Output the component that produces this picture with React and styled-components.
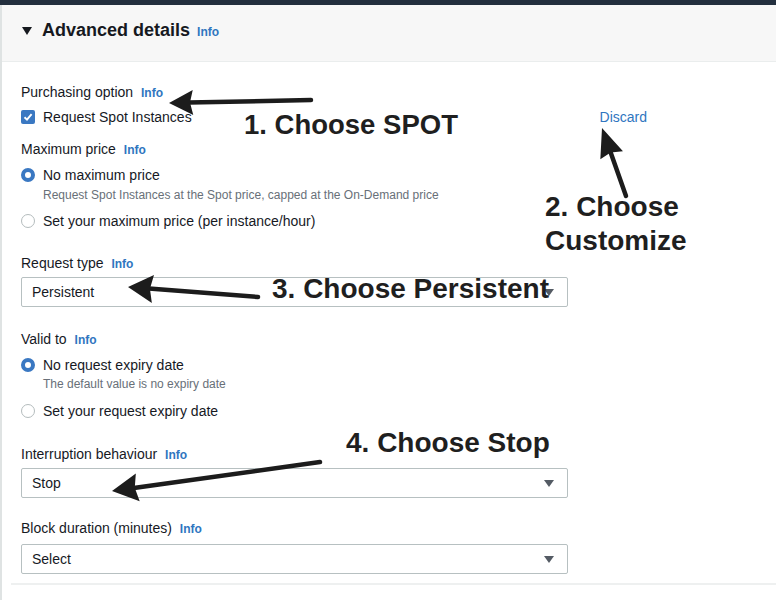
import React from 'react';
import styled, { createGlobalStyle } from 'styled-components';

const GlobalStyle = createGlobalStyle`
  body {
    margin: 0;
    background: #fff;
    font-family: "Liberation Sans", Arial, sans-serif;
    color: #16191f;
  }
`;

const BLUE = '#2f76bf';

const Arrow = ({ from, to, head = 25, spread = 13, width = 4.5 }) => {
  const [x1, y1] = from;
  const [x2, y2] = to;
  const len = Math.hypot(x2 - x1, y2 - y1);
  const ux = (x2 - x1) / len;
  const uy = (y2 - y1) / len;
  const bx = x2 - ux * head;
  const by = y2 - uy * head;
  const px = -uy * spread;
  const py = ux * spread;
  return (
    <g>
      <line x1={x1} y1={y1} x2={bx + ux * 4} y2={by + uy * 4} stroke="#1c1c1c" strokeWidth={width} strokeLinecap="round" />
      <polygon
        points={`${x2},${y2} ${bx + px},${by + py} ${bx + ux * 3},${by + uy * 3} ${bx - px},${by - py}`}
        fill="#1c1c1c"
      />
    </g>
  );
};

const App = () => {
  return (
    <Page>
      <GlobalStyle />
      <TopBar />
      <Panel>
        <Header>
          <Caret width="10" height="8" viewBox="0 0 10 8">
            <polygon points="0,0 10,0 5,8" fill="#16191f" />
          </Caret>
          <Title>Advanced details</Title>
          <Info>Info</Info>
        </Header>

        <Body>
          <FieldLabel $mt={0}>Purchasing option <Info>Info</Info></FieldLabel>
          <CheckRow>
            <OptionRow $mt={4}>
              <Checkbox>
                <svg width="10" height="10" viewBox="0 0 10 10">
                  <polyline points="1.5,5.2 4,7.6 8.6,2.2" fill="none" stroke="#fff" strokeWidth="1.9" />
                </svg>
              </Checkbox>
              Request Spot Instances
            </OptionRow>
            <Link>Discard</Link>
          </CheckRow>

          <FieldLabel $mt={12}>Maximum price <Info>Info</Info></FieldLabel>
          <OptionRow $mt={5}><Radio $on />No maximum price</OptionRow>
          <Hint $mt={2}>Request Spot Instances at the Spot price, capped at the On-Demand price</Hint>
          <OptionRow $mt={8}><Radio />Set your maximum price (per instance/hour)</OptionRow>

          <FieldLabel $mt={22}>Request type <Info>Info</Info></FieldLabel>
          <Select $mt={3}>Persistent<SelectCaret /></Select>

          <FieldLabel $mt={22}>Valid to <Info>Info</Info></FieldLabel>
          <OptionRow $mt={5}><Radio $on />No request expiry date</OptionRow>
          <Hint $mt={1}>The default value is no expiry date</Hint>
          <OptionRow $mt={9}><Radio />Set your request expiry date</OptionRow>

          <FieldLabel $mt={23}>Interruption behaviour <Info>Info</Info></FieldLabel>
          <Select $mt={3}>Stop<SelectCaret /></Select>

          <FieldLabel $mt={20}>Block duration (minutes) <Info>Info</Info></FieldLabel>
          <Select $mt={5}>Select<SelectCaret /></Select>
        </Body>
        <Divider />
      </Panel>

      <Overlay width="776" height="600" viewBox="0 0 776 600">
        <Arrow from={[311, 100]} to={[169, 103]} head={24} spread={12.5} />
        <Arrow from={[626, 196]} to={[602, 128]} head={29} spread={12} />
        <Arrow from={[258, 297]} to={[128, 287]} head={25} spread={14} />
        <Arrow from={[320, 462]} to={[112, 491]} head={26} spread={14} />
      </Overlay>

      <Note $x={244} $y={108} $size={27.5}>1. Choose SPOT</Note>
      <Note $x={545} $y={190}>2. Choose<br />Customize</Note>
      <Note $x={272} $y={272}>3. Choose Persistent</Note>
      <Note $x={346} $y={426}>4. Choose Stop</Note>
    </Page>
  );
};

export default App;

// Styled Components:

const Page = styled.div`
  position: relative;
  width: 776px;
  height: 600px;
  overflow: hidden;
  background: #fff;
`;
const TopBar = styled.div`
  height: 5px;
  background: #232f3e;
`;
const Panel = styled.section`
  height: 595px;
  box-sizing: border-box;
  border-left: 2px solid #dfe3e3;
`;
const Header = styled.div`
  display: flex;
  align-items: baseline;
  height: 57px;
  box-sizing: border-box;
  padding: 14px 0 0 20px;
  background: #f7f7f7;
  border-bottom: 1px solid #eaeded;
`;
const Caret = styled.svg`
  align-self: flex-start;
  margin: 8px 10px 0 0;
`;
const Title = styled.h2`
  margin: 0 3px 0 0;
  font-size: 18px;
  line-height: 22px;
  font-weight: 700;
`;
const Info = styled.span`
  color: ${BLUE};
  font-size: 12px;
  font-weight: 700;
  margin-left: 4px;
`;
const Body = styled.div`
  padding: 20px 0 0 19px;
`;
const FieldLabel = styled.div`
  margin-top: ${p => p.$mt}px;
  font-size: 14px;
  line-height: 20px;
`;
const CheckRow = styled.div`
  display: flex;
  align-items: flex-end;
  justify-content: space-between;
  width: 626px;
`;
const OptionRow = styled.div`
  display: flex;
  align-items: center;
  gap: 8px;
  margin-top: ${p => p.$mt}px;
  font-size: 14px;
  line-height: 20px;
`;
const Checkbox = styled.span`
  display: flex;
  align-items: center;
  justify-content: center;
  width: 14px;
  height: 14px;
  border-radius: 2px;
  background: #3a78c2;
`;
const Radio = styled.span`
  width: 14px;
  height: 14px;
  box-sizing: border-box;
  border-radius: 50%;
  background: #fff;
  border: ${p => (p.$on ? '4px solid #3a78c2' : '1.5px solid #b4bcbd')};
`;
const Link = styled.span`
  color: ${BLUE};
  font-size: 14px;
  line-height: 20px;
`;
const Hint = styled.div`
  margin: ${p => p.$mt}px 0 0 22px;
  font-size: 12px;
  line-height: 16px;
  color: #687078;
`;
const Select = styled.div`
  display: flex;
  align-items: center;
  justify-content: space-between;
  width: 547px;
  height: 30px;
  box-sizing: border-box;
  margin-top: ${p => p.$mt}px;
  padding: 0 13px 0 10px;
  border: 1px solid #b7c0c1;
  border-radius: 2px;
  font-size: 14px;
  line-height: 20px;
`;
const SelectCaret = styled.span`
  width: 0;
  height: 0;
  border-left: 5px solid transparent;
  border-right: 5px solid transparent;
  border-top: 7px solid #545b64;
`;
const Divider = styled.div`
  margin: 9px 0 0 9px;
  border-top: 2px solid #eef0f0;
`;
const Overlay = styled.svg`
  position: absolute;
  left: 0;
  top: 0;
  pointer-events: none;
`;
const Note = styled.div`
  position: absolute;
  left: ${p => p.$x}px;
  top: ${p => p.$y}px;
  font-family: "Liberation Sans", Arial, sans-serif;
  font-size: ${p => p.$size || 28}px;
  line-height: 34px;
  font-weight: 700;
  color: #1f1f1f;
  white-space: nowrap;
`;
